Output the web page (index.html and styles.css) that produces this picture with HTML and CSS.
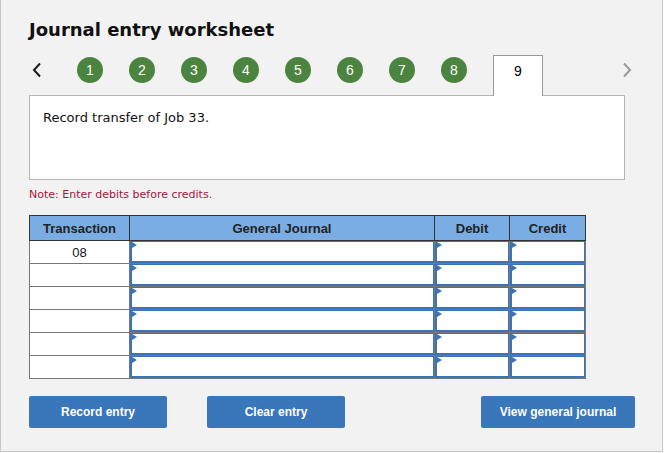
FILE: index.html
```html
<!DOCTYPE html>
<html lang="en">
<head>
    <meta charset="UTF-8">
    <title>Journal entry worksheet</title>
    <link rel="stylesheet" href="styles.css">
</head>
<body>
    <div class="wrap">
        <h2 class="title">Journal entry worksheet</h2>

        <div class="steps">
            <svg class="arrow prev" width="10" height="16" viewBox="0 0 10 16"><polyline points="8,1.5 2,8 8,14.5" /></svg>
            <span class="step first">1</span>
            <span class="step">2</span>
            <span class="step">3</span>
            <span class="step">4</span>
            <span class="step">5</span>
            <span class="step">6</span>
            <span class="step">7</span>
            <span class="step">8</span>
            <span class="tab">9</span>
            <svg class="arrow next" width="10" height="16" viewBox="0 0 10 16"><polyline points="2,1.5 8,8 2,14.5" /></svg>
        </div>

        <div class="task">Record transfer of Job 33.</div>

        <p class="note">Note: Enter debits before credits.</p>

        <table class="journal">
            <thead>
                <tr>
                    <th class="c-tr">Transaction</th>
                    <th class="c-gj">General Journal</th>
                    <th class="c-dr">Debit</th>
                    <th class="c-cr">Credit</th>
                </tr>
            </thead>
            <tbody>
                <tr><td class="num">08</td><td><div class="inp"></div></td><td><div class="inp"></div></td><td><div class="inp"></div></td></tr>
                <tr><td class="num"></td><td><div class="inp"></div></td><td><div class="inp"></div></td><td><div class="inp"></div></td></tr>
                <tr><td class="num"></td><td><div class="inp"></div></td><td><div class="inp"></div></td><td><div class="inp"></div></td></tr>
                <tr><td class="num"></td><td><div class="inp"></div></td><td><div class="inp"></div></td><td><div class="inp"></div></td></tr>
                <tr><td class="num"></td><td><div class="inp"></div></td><td><div class="inp"></div></td><td><div class="inp"></div></td></tr>
                <tr><td class="num"></td><td><div class="inp"></div></td><td><div class="inp"></div></td><td><div class="inp"></div></td></tr>
            </tbody>
        </table>

        <div class="actions">
            <button class="btn">Record entry</button>
            <button class="btn">Clear entry</button>
            <button class="btn wide">View general journal</button>
        </div>
    </div>
</body>
</html>
```

FILE: styles.css
```css
body {
    margin: 0;
    font-family: "DejaVu Sans", Verdana, sans-serif;
    background: #fff;
}
.wrap {
    width: 663px;
    height: 452px;
    box-sizing: border-box;
    background: #f2f2f2;
    border: 1px solid #c6c6c6;
    border-top: none;
    padding: 19px 27px 0 28px;
}
.title {
    margin: 0;
    font-size: 18px;
    line-height: 22px;
    font-weight: bold;
    color: #111;
}
.steps {
    display: flex;
    align-items: flex-start;
    height: 41px;
    margin-top: 14px;
    position: relative;
    z-index: 1;
}
.arrow {
    margin-top: 7px;
    fill: none;
    stroke-width: 2;
}
.prev {
    margin-left: 3px;
    stroke: #1a1a1a;
}
.next {
    margin-left: auto;
    margin-right: 3px;
    stroke: #9a9a9a;
}
.step {
    width: 26px;
    height: 26px;
    margin-top: 2px;
    margin-left: 26px;
    border-radius: 50%;
    background: #4b843e;
    color: #fff;
    font-family: "Liberation Sans", Arial, sans-serif;
    font-size: 14px;
    line-height: 26px;
    text-align: center;
}
.step.first {
    margin-left: 35px;
}
.tab {
    width: 50px;
    height: 41px;
    box-sizing: border-box;
    margin-left: 26px;
    padding-top: 7px;
    background: #fff;
    border: 1px solid #999;
    border-bottom: none;
    font-family: "Liberation Sans", Arial, sans-serif;
    font-size: 14px;
    line-height: 16px;
    text-align: center;
    color: #000;
}
.task {
    width: 596px;
    height: 85px;
    box-sizing: border-box;
    margin-top: -1px;
    padding: 14px 14px 0 13px;
    background: #fff;
    border: 1px solid #b4b4b4;
    font-size: 13px;
    line-height: 16px;
    color: #111;
}
.note {
    margin: 8px 0 0;
    font-size: 11px;
    line-height: 13px;
    color: #a4163a;
}
.journal {
    margin-top: 14px;
    border-collapse: collapse;
    table-layout: fixed;
    width: 556px;
    font-family: "Liberation Sans", Arial, sans-serif;
    font-size: 13px;
}
.journal th {
    height: 24px;
    padding: 0;
    background: #79ade3;
    border: 1px solid #333;
    color: #222;
    font-weight: bold;
}
.c-tr { width: 99px; }
.c-gj { width: 304px; }
.c-dr { width: 74px; }
.c-cr { width: 75px; }
.journal td {
    height: 22px;
    padding: 0;
    background: #fff;
    border: 1px solid #777;
}
.journal td.num {
    text-align: center;
    color: #111;
}
.inp {
    position: relative;
    height: 22px;
    box-sizing: border-box;
    border: 1px solid #3d73b6;
    border-left-width: 2px;
    border-bottom-width: 2px;
    background: #fff;
}
.inp::before {
    content: "";
    position: absolute;
    left: 0;
    top: 0;
    border-top: 3px solid transparent;
    border-bottom: 3px solid transparent;
    border-left: 5px solid #3d73b6;
}
.actions {
    display: flex;
    margin-top: 17px;
}
.btn {
    width: 138px;
    height: 32px;
    margin-right: 40px;
    padding: 0;
    border: none;
    border-radius: 2px;
    background: #3a76ba;
    color: #fff;
    font-family: "Liberation Sans", Arial, sans-serif;
    font-size: 12px;
    font-weight: bold;
    cursor: pointer;
}
.btn.wide {
    width: 154px;
    margin-left: auto;
    margin-right: 0;
}
```
